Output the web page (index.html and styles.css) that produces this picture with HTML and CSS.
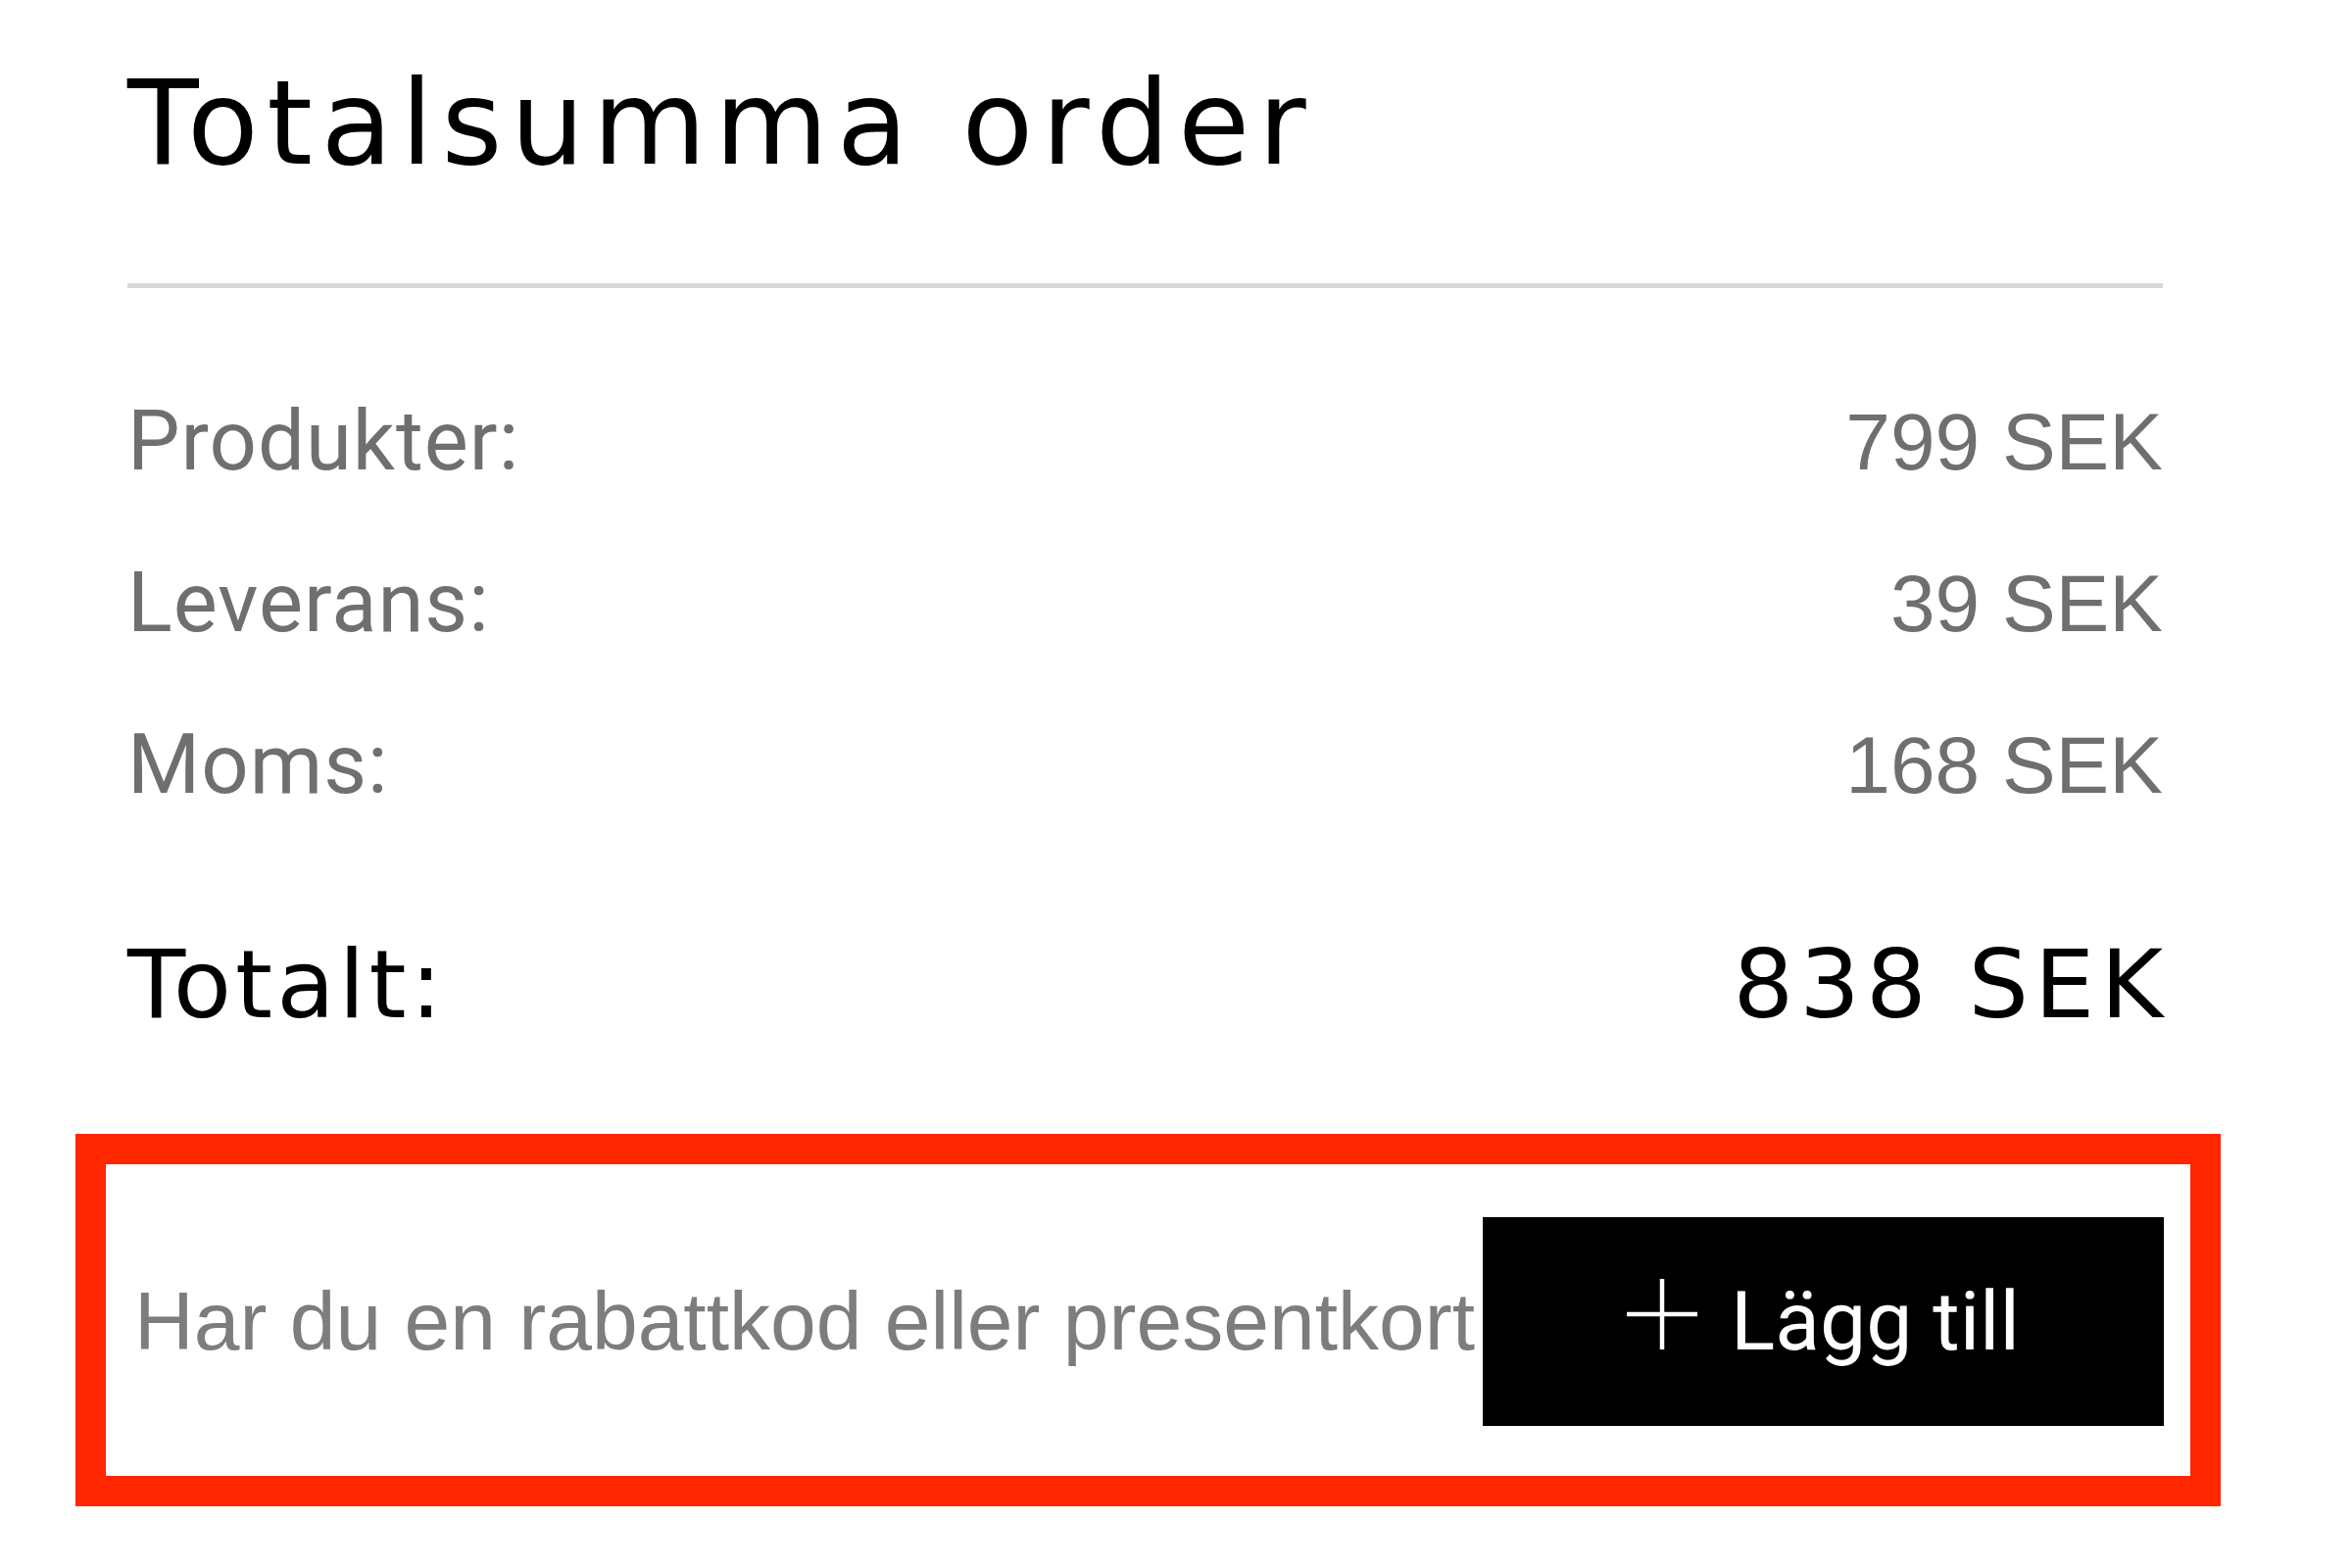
FILE: index.html
```html
<!DOCTYPE html>
<html lang="sv">
<head>
  <meta charset="UTF-8">
  <meta name="viewport" content="width=device-width, initial-scale=1.0">
  <title>Totalsumma order</title>
  <link rel="stylesheet" href="styles.css">
</head>
<body>
  <section class="summary">
    <h1 class="summary-title">Totalsumma order</h1>
    <hr class="divider">

    <div class="lines">
      <div class="line">
        <span class="line-label">Produkter:</span>
        <span class="line-value">799 SEK</span>
      </div>
      <div class="line">
        <span class="line-label">Leverans:</span>
        <span class="line-value">39 SEK</span>
      </div>
      <div class="line">
        <span class="line-label">Moms:</span>
        <span class="line-value">168 SEK</span>
      </div>
    </div>

    <div class="total">
      <span class="total-label">Totalt:</span>
      <span class="total-value">838 SEK</span>
    </div>

    <!-- discount code / gift card -->
    <form class="promo">
      <input class="promo-input" type="text" placeholder="Har du en rabattkod eller presentkort?">
      <button class="promo-button" type="button">
        <svg class="plus" viewBox="0 0 72 72" width="72" height="72">
          <path d="M36 0V72M0 36H72" stroke="#fff" stroke-width="4.5" fill="none"/>
        </svg>
        <span>Lägg till</span>
      </button>
    </form>
  </section>
</body>
</html>
```

FILE: styles.css
```css
body {
  margin: 0;
  background-color: #fff;
  color: #000;
}
.summary {
  margin-left: 130px;
  width: 2077px;
}
.summary-title {
  font-family: "DejaVu Sans", sans-serif;
  font-weight: normal;
  font-size: 119px;
  line-height: 1;
  letter-spacing: 8.5px;
  margin: 67px 0 0;
}
.divider {
  border: none;
  height: 5px;
  background-color: #d8d8d8;
  margin: 103px 0 0;
}
.lines {
  margin-top: 74px;
}
.line {
  display: flex;
  justify-content: space-between;
  align-items: baseline;
  height: 165px;
  line-height: 165px;
  color: #6f6f6f;
}
.line-label {
  font-family: Roboto, "Liberation Sans", sans-serif;
  font-size: 85px;
  letter-spacing: 1px;
}
.line-value {
  font-family: "Liberation Sans", Arial, sans-serif;
  font-size: 82px;
}
.total {
  display: flex;
  justify-content: space-between;
  align-items: baseline;
  font-family: "DejaVu Sans", sans-serif;
  font-size: 97px;
  line-height: 120px;
  margin-top: 82px;
}
.total-label {
  letter-spacing: 4px;
}
.total-value {
  letter-spacing: 6px;
  margin-right: -6px;
}
.promo {
  display: flex;
  box-sizing: border-box;
  margin: 92px -59px 0 -53px;
  padding: 54px 27px 51px 29px;
  border: 31px solid #ff2600;
}
.promo-input {
  flex: 1;
  min-width: 0;
  border: none;
  outline: none;
  padding: 0 5px 0 0;
  margin: 0;
  background: transparent;
  font-family: "Liberation Sans", Arial, sans-serif;
  font-size: 84px;
  color: #000;
}
.promo-input::placeholder {
  color: #7d7d7d;
}
.promo-button {
  display: flex;
  align-items: center;
  justify-content: center;
  gap: 34px;
  width: 695px;
  height: 213px;
  padding: 0;
  border: none;
  background-color: #000;
  color: #fff;
  font-family: Roboto, "Liberation Sans", sans-serif;
  font-size: 84px;
  line-height: 1;
  cursor: pointer;
}
.plus {
  display: block;
  margin-bottom: 15px;
}
```
